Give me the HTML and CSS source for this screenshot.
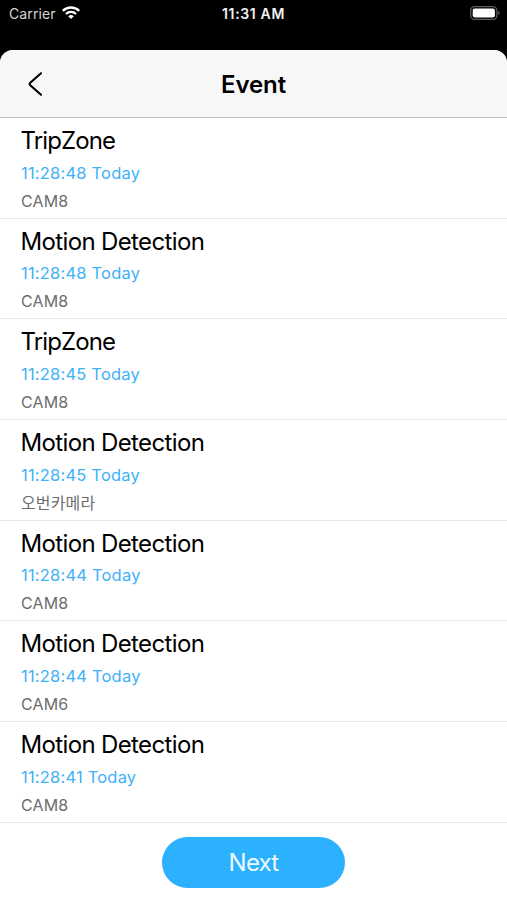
FILE: index.html
```html
<!DOCTYPE html>
<html lang="en">
<head>
<meta charset="utf-8">
<title>Event</title>
<link rel="stylesheet" href="styles.css">
</head>
<body>
<div class="status">
  <div class="carrier"><span>Carrier</span>
    <svg class="wifi" width="18" height="13" viewBox="0 0 18 13"><path d="M9 13 6.2 10.3a4 4 0 0 1 5.6 0Z" fill="#fff"/><path d="M3.9 8a7.3 7.3 0 0 1 10.2 0M.8 4.8a11.8 11.8 0 0 1 16.4 0" fill="none" stroke="#fff" stroke-width="2.3"/></svg>
  </div>
  <div class="clock">11:31 AM</div>
  <svg class="battery" width="31" height="14" viewBox="0 0 31 14"><rect x=".7" y=".6" width="26.2" height="12.8" rx="4" fill="none" stroke="#5c5c5c" stroke-width="1.3"/><rect x="2.7" y="2.5" width="22.2" height="9" rx="2" fill="#fff"/><path d="M28.3 4.7q2.6 2.3 0 4.6z" fill="#666"/></svg>
</div>
<main class="sheet">
  <header class="nav">
    <svg class="back" width="16" height="26" viewBox="0 0 16 26"><path d="M14 2.2 3 12Q2 13 3 14l11 9.8" fill="none" stroke="#000" stroke-width="2.1" stroke-linecap="round"/></svg>
    <h1>Event</h1>
  </header>
  <ul class="events">
    <li><h2 class="short">TripZone</h2><time>11:28:48 Today</time><p>CAM8</p></li>
    <li><h2>Motion Detection</h2><time>11:28:48 Today</time><p>CAM8</p></li>
    <li><h2 class="short">TripZone</h2><time>11:28:45 Today</time><p>CAM8</p></li>
    <li><h2>Motion Detection</h2><time>11:28:45 Today</time><p>오번카메라</p></li>
    <li><h2>Motion Detection</h2><time>11:28:44 Today</time><p>CAM8</p></li>
    <li><h2>Motion Detection</h2><time>11:28:44 Today</time><p>CAM6</p></li>
    <li><h2>Motion Detection</h2><time>11:28:41 Today</time><p>CAM8</p></li>
  </ul>
  <button class="next">Next</button>
</main>
</body>
</html>
```
FILE: styles.css
```css
* { box-sizing: border-box; margin: 0; padding: 0; }
body { width: 507px; height: 900px; overflow: hidden; background: #000; font-family: Inter, "Noto Sans CJK KR", sans-serif; }
.status { height: 50px; padding: 0 6px 0 9px; display: grid; grid-template-columns: 213px 1fr auto; align-items: start; color: #f2f2f2; font-size: 14px; line-height: 28px; }
.carrier { display: flex; gap: 6px; color: #d4d4d4; letter-spacing: .1px; }
.wifi { margin-top: 6px; }
.clock { font-weight: 600; letter-spacing: .65px; }
.battery { margin-top: 6px; }
.sheet { height: 850px; background: #fff; border-radius: 13px 13px 0 0; overflow: hidden; }
.nav { height: 68px; background: #f7f7f7; border-bottom: 1px solid #c2c2c2; display: grid; grid-template-columns: 1fr auto 1fr; align-items: center; }
.back { margin-left: 27px; }
.nav h1 { padding-top: 2px; font-size: 24px; font-weight: 600; letter-spacing: -.1px; }
.events { list-style: none; }
.events li { height: 100.67px; padding: 8px 21px 0; border-bottom: 1px solid #e6e6e6; }
.events h2 { margin-left: -.5px; font-size: 24px; line-height: 30px; font-weight: 400; letter-spacing: -.64px; }
.events .short { letter-spacing: -.9px; }
.events time { display: block; margin-top: 4.6px; font-size: 16.5px; line-height: 24px; letter-spacing: .2px; color: #3fb1f9; }
.events p { font-size: 16px; line-height: 22px; margin-top: 5px; letter-spacing: .15px; color: #6d6d6d; }
.next { display: block; width: 183px; height: 51px; margin: 14px auto 0; border: 0; border-radius: 26px; background: #2cb1ff; color: #edf9ff; font: 24px Inter, sans-serif; letter-spacing: -.8px; }
```
